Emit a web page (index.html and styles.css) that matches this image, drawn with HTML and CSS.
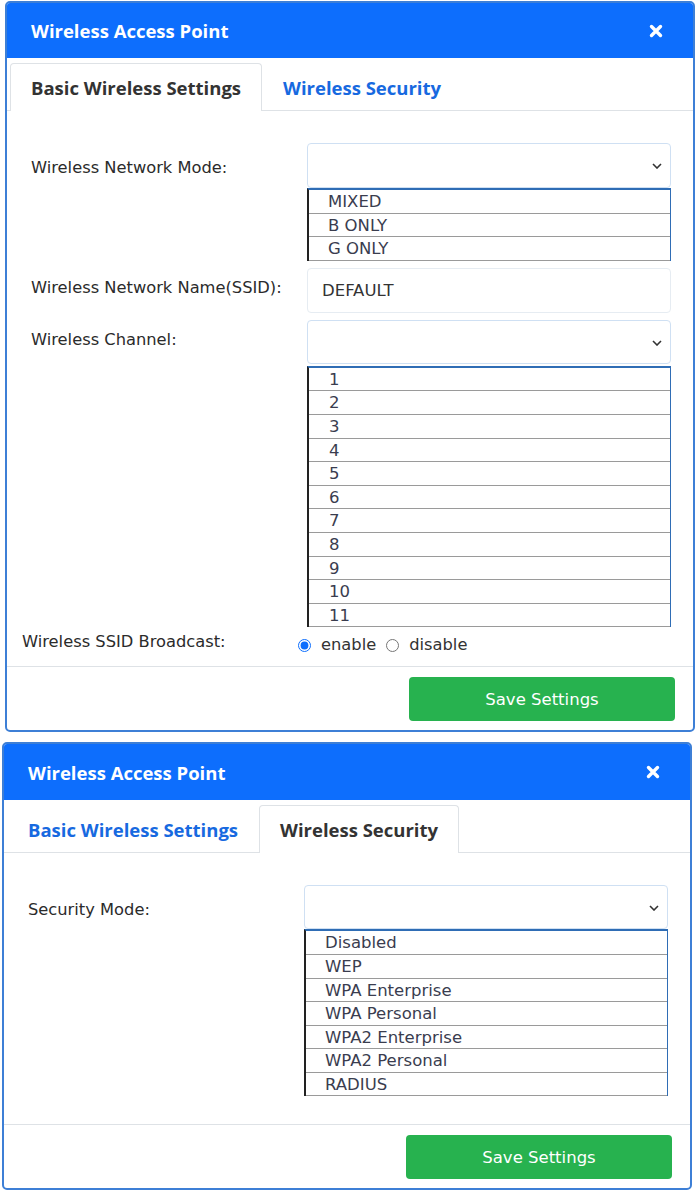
FILE: index.html
```html
<!DOCTYPE html>
<html lang="en">
<head>
    <meta charset="UTF-8">
    <meta name="viewport" content="width=device-width, initial-scale=1.0">
    <title>Wireless Access Point</title>
    <link rel="stylesheet" href="styles.css">
</head>
<body>

    <div class="dialog dialog-basic">
        <div class="dialog-header">
            <h2>Wireless Access Point</h2>
            <span class="close">
                <svg width="14" height="14" viewBox="0 0 14 14"><path d="M2.5 2.5 L11.5 11.5 M11.5 2.5 L2.5 11.5" stroke="#fff" stroke-width="3.4" stroke-linecap="round"/></svg>
            </span>
        </div>
        <div class="tabs">
            <div class="tab active">Basic Wireless Settings</div>
            <div class="tab">Wireless Security</div>
        </div>
        <div class="dialog-body">
            <div class="field field-first">
                <label>Wireless Network Mode:</label>
                <div class="control">
                    <div class="select">
                        <svg width="10" height="6" viewBox="0 0 10 6"><path d="M1 1 L5 5 L9 1" fill="none" stroke="#333" stroke-width="1.6"/></svg>
                    </div>
                    <ul class="options">
                        <li>MIXED</li>
                        <li>B ONLY</li>
                        <li>G ONLY</li>
                    </ul>
                </div>
            </div>
            <div class="field">
                <label>Wireless Network Name(SSID):</label>
                <div class="control">
                    <input type="text" class="text-input" value="DEFAULT">
                </div>
            </div>
            <div class="field">
                <label>Wireless Channel:</label>
                <div class="control">
                    <div class="select select-short">
                        <svg width="10" height="6" viewBox="0 0 10 6"><path d="M1 1 L5 5 L9 1" fill="none" stroke="#333" stroke-width="1.6"/></svg>
                    </div>
                    <ul class="options options-channel">
                        <li>1</li>
                        <li>2</li>
                        <li>3</li>
                        <li>4</li>
                        <li>5</li>
                        <li>6</li>
                        <li>7</li>
                        <li>8</li>
                        <li>9</li>
                        <li>10</li>
                        <li>11</li>
                    </ul>
                </div>
            </div>
            <div class="field field-broadcast">
                <label>Wireless SSID Broadcast:</label>
                <div class="radios">
                    <label class="radio"><input type="radio" name="broadcast" checked> enable</label>
                    <label class="radio"><input type="radio" name="broadcast"> disable</label>
                </div>
            </div>
        </div>
        <div class="dialog-footer">
            <button>Save Settings</button>
        </div>
    </div>

    <div class="dialog dialog-security">
        <div class="dialog-header">
            <h2>Wireless Access Point</h2>
            <span class="close">
                <svg width="14" height="14" viewBox="0 0 14 14"><path d="M2.5 2.5 L11.5 11.5 M11.5 2.5 L2.5 11.5" stroke="#fff" stroke-width="3.4" stroke-linecap="round"/></svg>
            </span>
        </div>
        <div class="tabs">
            <div class="tab">Basic Wireless Settings</div>
            <div class="tab active">Wireless Security</div>
        </div>
        <div class="dialog-body">
            <div class="field field-first">
                <label>Security Mode:</label>
                <div class="control">
                    <div class="select select-short">
                        <svg width="10" height="6" viewBox="0 0 10 6"><path d="M1 1 L5 5 L9 1" fill="none" stroke="#333" stroke-width="1.6"/></svg>
                    </div>
                    <ul class="options">
                        <li>Disabled</li>
                        <li>WEP</li>
                        <li>WPA Enterprise</li>
                        <li>WPA Personal</li>
                        <li>WPA2 Enterprise</li>
                        <li>WPA2 Personal</li>
                        <li>RADIUS</li>
                    </ul>
                </div>
            </div>
        </div>
        <div class="dialog-footer">
            <button>Save Settings</button>
        </div>
    </div>

</body>
</html>
```

FILE: styles.css
```css
body {
    margin: 0;
    padding: 1px 0 0;
    background: #fff;
    font-family: "DejaVu Sans", Verdana, sans-serif;
    color: #333;
}

.dialog {
    width: 686px;
    border: 2px solid #3d7fd6;
    border-radius: 5px;
    overflow: hidden;
    background: #fff;
}

.dialog-basic {
    margin-left: 5px;
}

.dialog-security {
    margin: 10px 0 0 2px;
}

.dialog-header {
    display: flex;
    align-items: center;
    justify-content: space-between;
    height: 55px;
    padding: 0 30px 0 24px;
    background: #0d6efd;
}

.dialog-security .dialog-header {
    height: 56px;
}

.dialog-header h2 {
    margin: 0;
    font-family: "Open Sans", sans-serif;
    font-size: 18.5px;
    font-weight: 700;
    color: #fff;
}

.close {
    display: flex;
}

.tabs {
    display: flex;
    padding: 5px 0 0 3px;
    border-bottom: 1px solid #dee2e6;
}

.tab {
    height: 46px;
    line-height: 48px;
    padding: 0 20px;
    font-family: "Open Sans", sans-serif;
    font-size: 18.5px;
    font-weight: 700;
    color: #1769e0;
    border: 1px solid transparent;
    border-bottom: none;
    border-radius: 4px 4px 0 0;
}

.tab.active {
    color: #333;
    border-color: #dee2e6;
    margin-bottom: -1px;
    background: #fff;
    height: 47px;
}

.dialog-body {
    padding: 32px 22px 8px 24px;
}

.dialog-security .dialog-body {
    padding-bottom: 21px;
}

.field {
    display: grid;
    grid-template-columns: 276px 1fr;
    margin-bottom: 7px;
}

.field > label {
    padding-top: 10px;
    font-size: 16.3px;
    line-height: 20px;
    color: #2b2b2b;
}

.field-first > label {
    padding-top: 15px;
}

.select {
    position: relative;
    height: 43px;
    border: 1px solid #cfe0f3;
    border-radius: 4px;
    background: #fff;
}

.select svg {
    position: absolute;
    right: 8px;
    top: 19px;
}

.select-short {
    height: 42px;
}

.options {
    list-style: none;
    margin: 0;
    padding: 0;
    border-top: 2px solid #2f6db5;
    border-left: 2px solid #222;
    border-right: 1px solid #2f6db5;
}

.options-channel {
    margin-top: 2px;
}

.options li {
    height: 22.6px;
    line-height: 23px;
    padding-left: 19px;
    font-size: 16.5px;
    color: #3a3d4f;
    border-bottom: 1px solid #9a9a9a;
}

.options-channel li {
    padding-left: 20px;
}

.text-input {
    display: block;
    box-sizing: border-box;
    width: 100%;
    height: 45px;
    padding: 0 14px;
    border: 1px solid #e6ecf2;
    border-radius: 4px;
    font-family: inherit;
    font-size: 16.5px;
    color: #333;
}

.field-broadcast {
    margin: -2px 0 0 -9px;
}

.field-broadcast > label {
    padding-top: 0;
}

.radios {
    display: flex;
    gap: 10px;
    font-size: 16.3px;
    line-height: 26px;
}

.radio {
    display: flex;
    align-items: center;
}

.radio input {
    margin: 0 10px 0 0;
    width: 13px;
    height: 13px;
    accent-color: #0d6efd;
}

.dialog-footer {
    display: flex;
    justify-content: flex-end;
    padding: 10px 18px 9px;
    border-top: 1px solid #dee2e6;
}

button {
    width: 266px;
    height: 44px;
    border: none;
    border-radius: 4px;
    background: #27b24f;
    color: #fff;
    font-family: "DejaVu Sans", Verdana, sans-serif;
    font-size: 16.5px;
}
```
